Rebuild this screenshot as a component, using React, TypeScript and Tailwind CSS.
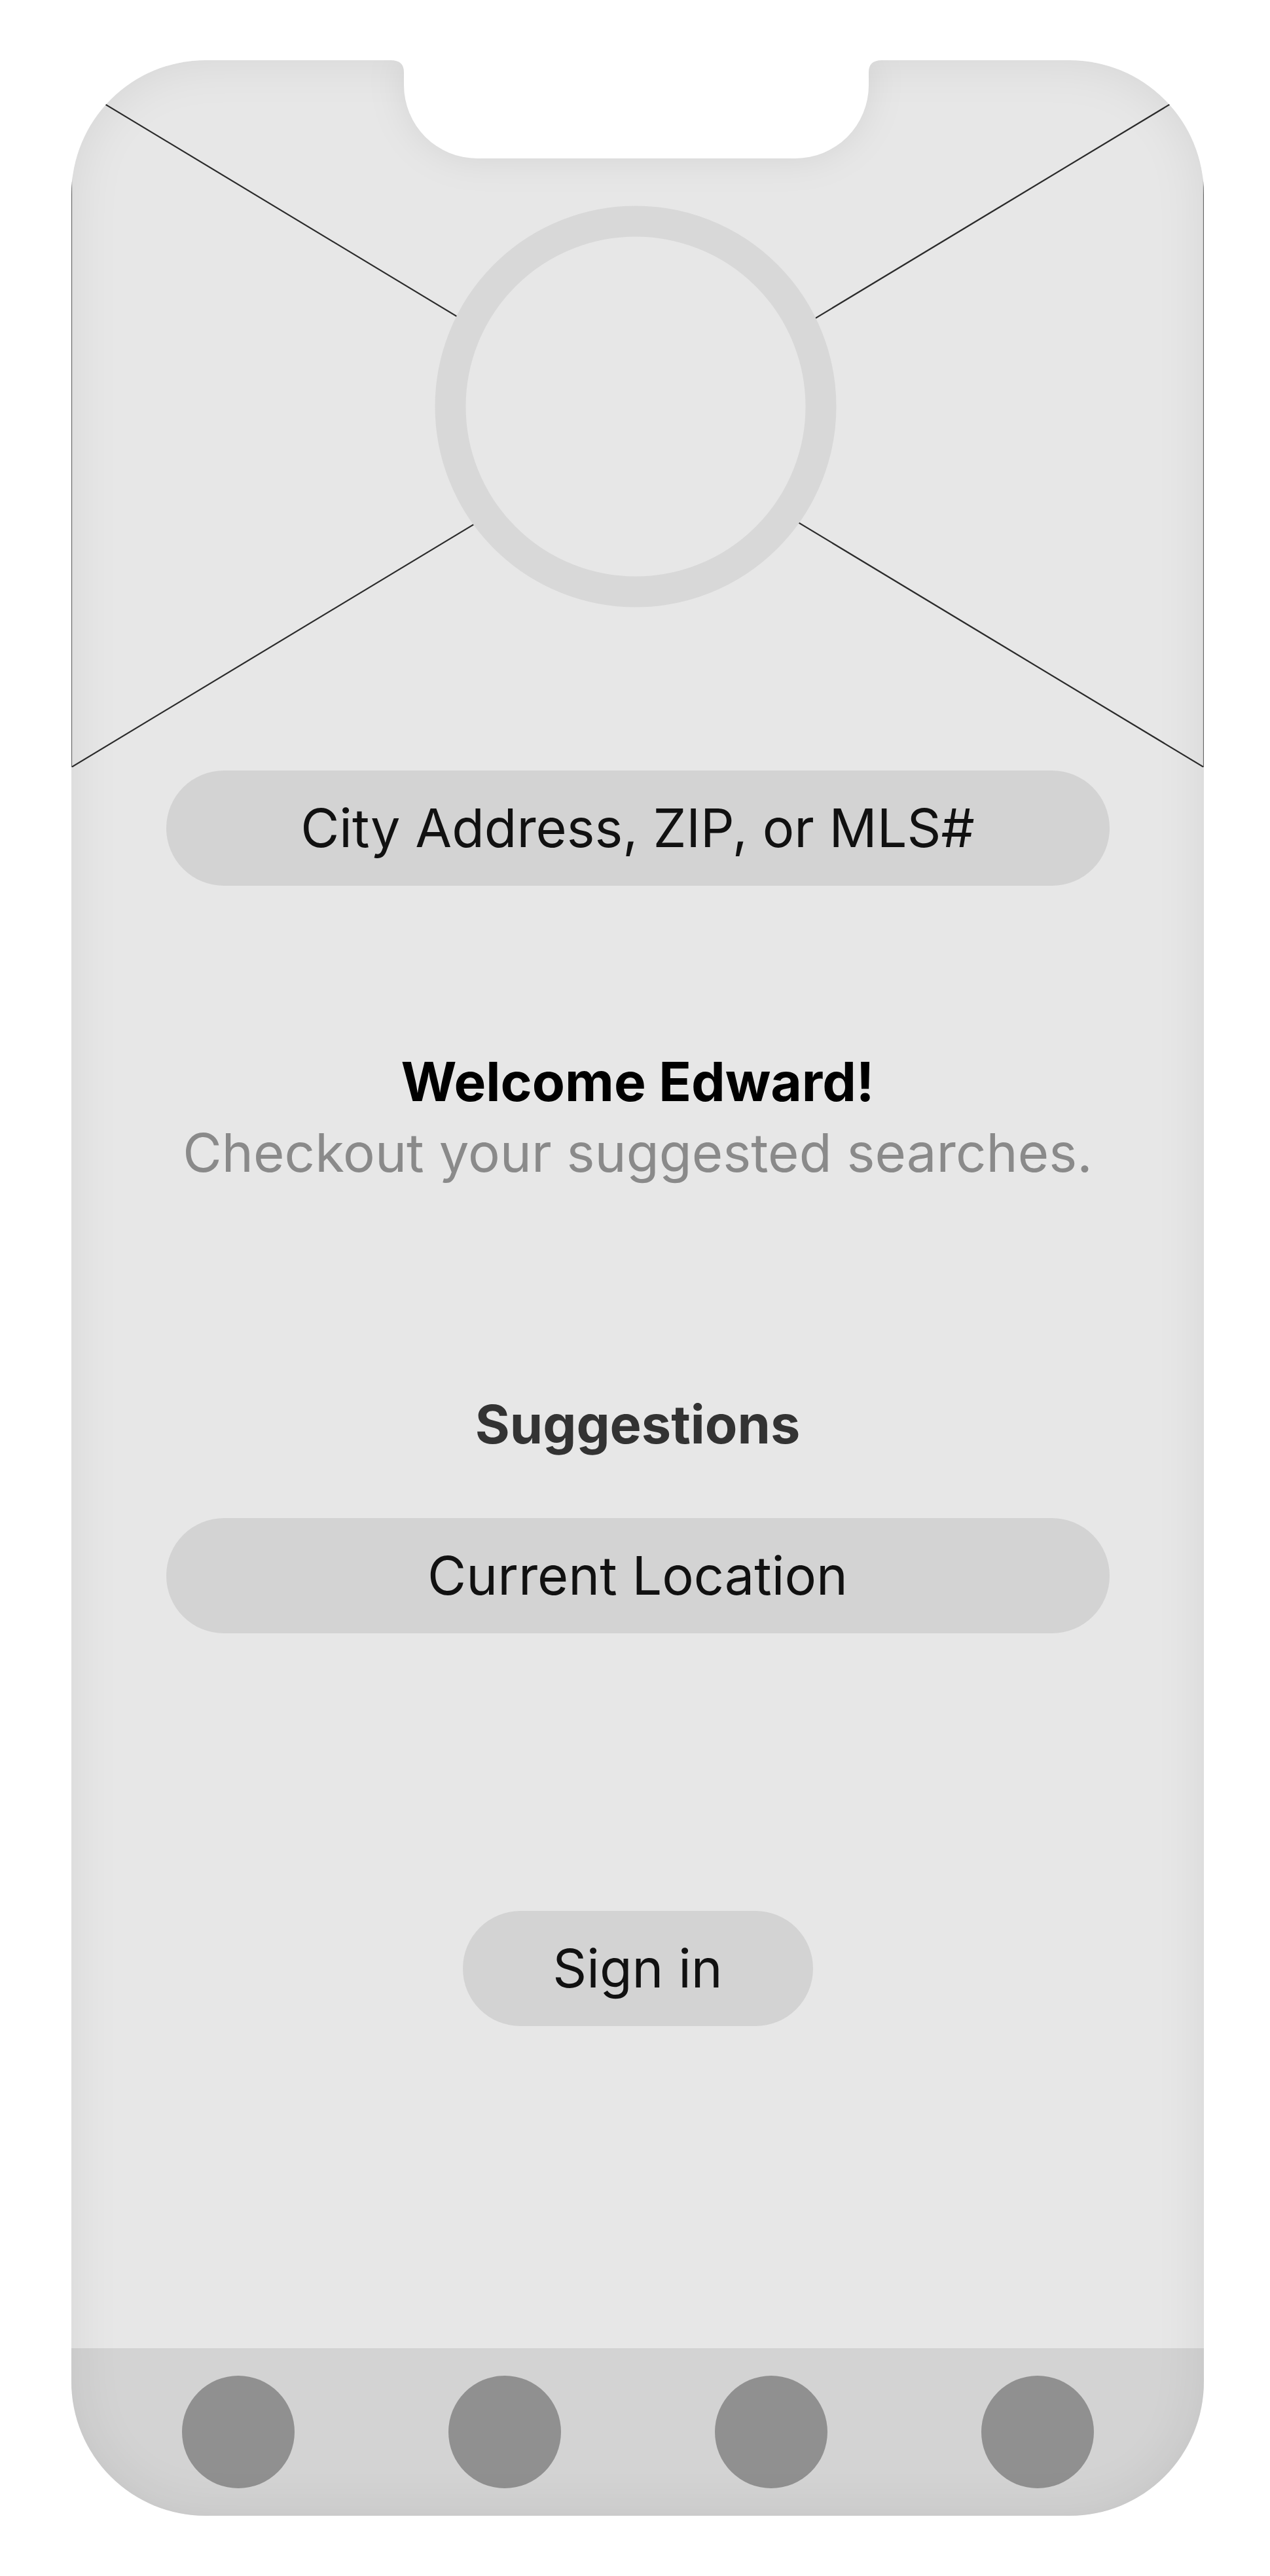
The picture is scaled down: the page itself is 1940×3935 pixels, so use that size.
import React from "react";

const W = 1730;

function Hero() {
    return (
        <div className="relative h-[1080px] w-full">
            <svg width={W} height={1080} viewBox={`0 0 ${W} 1080`} className="block">
                <line x1={0} y1={36} x2={W} y2={1080} stroke="#2b2b2b" strokeWidth={2.2} />
                <line x1={0} y1={1080} x2={W} y2={36} stroke="#2b2b2b" strokeWidth={2.2} />
                <line x1={0.5} y1={0} x2={0.5} y2={1080} stroke="#666" strokeWidth={1.2} />
                <line x1={W - 0.5} y1={0} x2={W - 0.5} y2={1080} stroke="#666" strokeWidth={1.2} />
                <circle cx={862} cy={529} r={283} fill="#e7e7e7" stroke="#d8d8d8" strokeWidth={47} />
            </svg>
        </div>
    );
}

function Pill({ label, className }: { label: string; className?: string }) {
    return (
        <div
            className={
                "flex h-[176px] items-center justify-center rounded-full bg-[#d3d3d3] text-[81px] leading-none text-[#111] " +
                (className ?? "")
            }
        >
            {label}
        </div>
    );
}

export default function App() {
    return (
        <div className="min-h-[3935px] bg-white pl-[109px] pt-[92px] font-['Inter',_'Liberation_Sans',_sans-serif]">
            <div className="relative flex h-[3751px] w-[1730px] flex-col overflow-hidden rounded-[205px] bg-[#e7e7e7]">
                <Hero />

                <div className="mt-[5px] flex justify-center">
                    <Pill label="City Address, ZIP, or MLS#" className="w-[1441px]" />
                </div>

                <div className="mt-[246px] flex flex-col items-center leading-[108px]">
                    <h1 className="text-[82px] font-bold text-black">Welcome Edward!</h1>
                    <p className="text-[81.5px] text-[#8a8a8a]">Checkout your suggested searches.</p>
                </div>

                <h2 className="mt-[307px] text-center text-[81px] font-bold leading-[108px] text-[#333]">
                    Suggestions
                </h2>

                <div className="mt-[89px] flex justify-center">
                    <Pill label="Current Location" className="w-[1441px]" />
                </div>

                <div className="mt-[424px] flex justify-center">
                    <Pill label="Sign in" className="w-[535px]" />
                </div>

                <nav className="mt-auto flex h-[256px] items-center justify-center gap-[235px] bg-[#d3d3d3]">
                    {[0, 1, 2, 3].map((i) => (
                        <div key={i} className="h-[172px] w-[172px] rounded-full bg-[#909090]" />
                    ))}
                </nav>

                {/* inner shading of the device */}
                <div className="pointer-events-none absolute inset-0 rounded-[205px] shadow-[inset_0_0_80px_rgba(0,0,0,0.08)]" />

                {/* notch */}
                <svg
                    width={750}
                    height={150}
                    viewBox="0 0 750 150"
                    className="absolute left-[488px] top-0 drop-shadow-[0_0_28px_rgba(0,0,0,0.08)]"
                >
                    <path
                        d="M0 0 Q20 0 20 18 L20 38 A112 112 0 0 0 132 150 L618 150 A112 112 0 0 0 730 38 L730 18 Q730 0 750 0 Z"
                        fill="#fff"
                    />
                </svg>
            </div>
        </div>
    );
}
